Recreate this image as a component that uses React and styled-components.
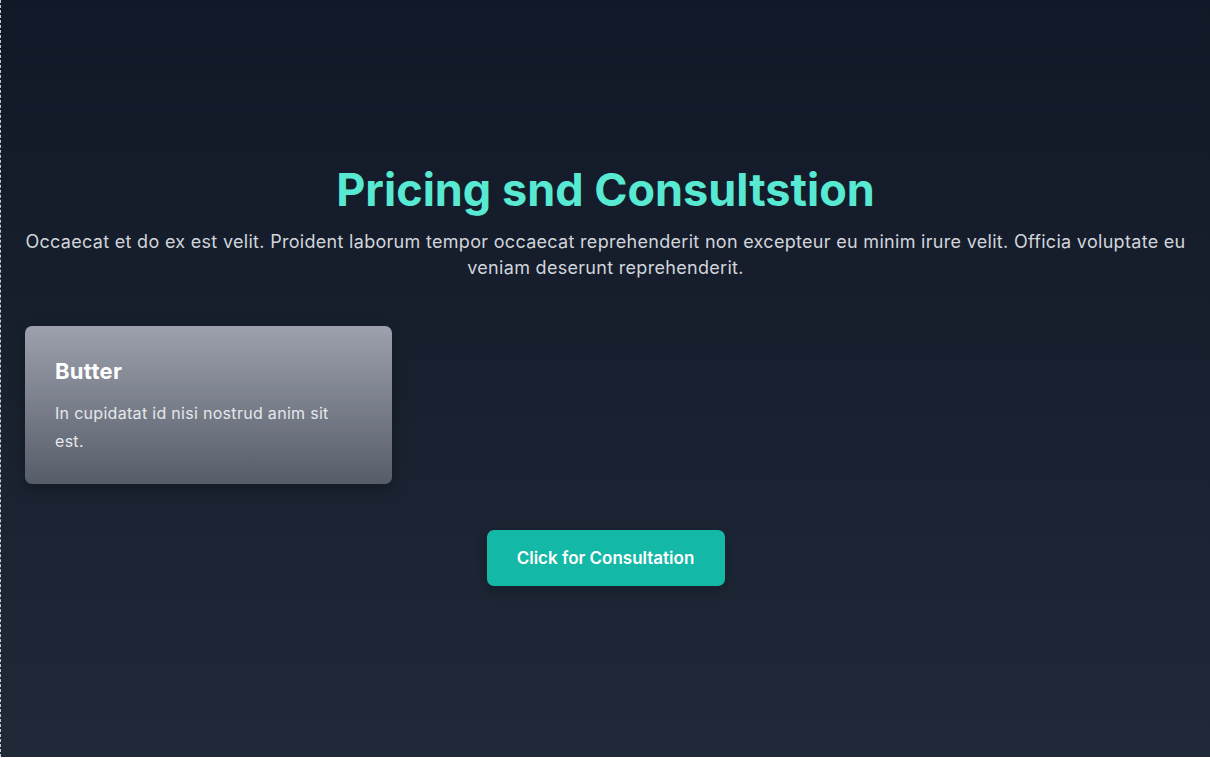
import React from 'react';
import styled, { createGlobalStyle } from 'styled-components';

const GlobalStyle = createGlobalStyle`
  * { box-sizing: border-box; }
  html, body { margin: 0; padding: 0; background: #ffffff; }
  body { font-family: "Inter", "Noto Sans", sans-serif; }
`;

const Section = styled.section`
  height: 757px;
  border-left: 1px dashed #c9ccd1;
  background: linear-gradient(180deg, #111827 0%, #1f2937 100%);
  display: flex;
  flex-direction: column;
  justify-content: center;
  padding: 0 24px 8px;
`;

const Title = styled.h2`
  margin: 0;
  text-align: center;
  font-size: 45px;
  line-height: 54px;
  font-weight: 700;
  color: #57e9d1;
`;

const Lead = styled.p`
  margin: 12px 0 0;
  text-align: center;
  font-size: 18px;
  line-height: 26px;
  letter-spacing: 0.3px;
  color: #d1d5db;
`;

const Grid = styled.div`
  margin-top: 45px;
  display: grid;
  grid-template-columns: repeat(3, 1fr);
  gap: 30px;
`;

const Card = styled.div`
  border-radius: 7px;
  padding: 30px 40px 29px 30px;
  background: linear-gradient(180deg, #9ca1ad 0%, #575c69 100%);
  box-shadow: 0 6px 16px rgba(0, 0, 0, 0.25);
`;

const CardTitle = styled.h3`
  margin: 0;
  font-size: 22px;
  line-height: 30px;
  font-weight: 700;
  letter-spacing: 0.3px;
  color: #ffffff;
`;

const CardText = styled.p`
  margin: 13px 0 0;
  font-size: 16px;
  line-height: 28px;
  letter-spacing: 0.3px;
  color: #e5e7eb;
`;

const Actions = styled.div`
  margin-top: 46px;
  display: flex;
  justify-content: center;
`;

const Button = styled.button`
  width: 238px;
  height: 56px;
  border: none;
  border-radius: 7px;
  background: #14b8a6;
  color: #ffffff;
  font-family: inherit;
  font-size: 17px;
  font-weight: 600;
  cursor: pointer;
  box-shadow: 0 4px 12px rgba(0, 0, 0, 0.2);
`;

const plans = [
  { name: 'Butter', text: 'In cupidatat id nisi nostrud anim sit est.' },
];

export default function App() {
  return (
    <>
      <GlobalStyle />
      <Section>
        <Title>Pricing snd Consultstion</Title>
        <Lead>
          Occaecat et do ex est velit. Proident laborum tempor occaecat reprehenderit non excepteur eu minim irure velit. Officia voluptate eu veniam deserunt reprehenderit.
        </Lead>
        <Grid>
          {plans.map((p) => (
            <Card key={p.name}>
              <CardTitle>{p.name}</CardTitle>
              <CardText>{p.text}</CardText>
            </Card>
          ))}
        </Grid>
        <Actions>
          <Button>Click for Consultation</Button>
        </Actions>
      </Section>
    </>
  );
}
